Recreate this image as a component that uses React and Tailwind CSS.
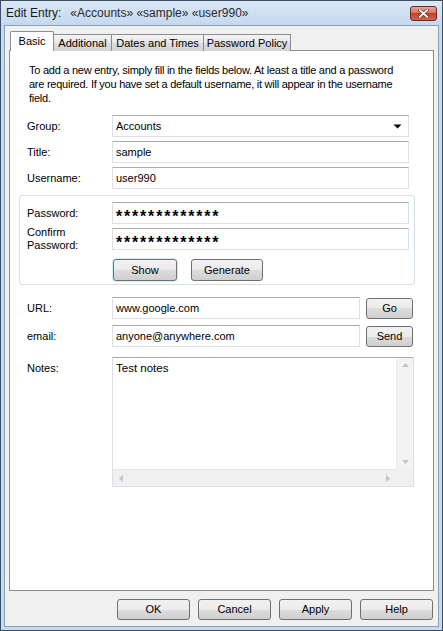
import React from 'react';

const Field = ({ className = '', children }) => (
    <div className={`h-[22px] bg-white border border-[#dbdfe6] border-t-[#abadb3] flex items-center px-[3px] shrink-0 ${className}`}>
        {children}
    </div>
);

const Btn = ({ className = '', children }) => (
    <div className={`h-[21px] rounded-[3px] border border-[#707070] bg-[linear-gradient(#f2f2f2,#ebebeb_50%,#dddddd_50%,#cfcfcf)] flex items-center justify-center text-[11px] text-black shrink-0 ${className}`}>
        {children}
    </div>
);

const Row = ({ label, children, className = '' }) => (
    <div className={`flex items-center h-[22px] ${className}`}>
        <div className="w-[85px] h-[22px] shrink-0 leading-[13px] flex flex-col justify-center">{label}</div>
        {children}
    </div>
);

const Stars = () => (
    <span className="font-bold text-[16px] tracking-[1.8px] leading-none pt-[7px]">*************</span>
);

const App = () => {
    return (
        <div className="w-[443px] h-[631px] flex flex-col border border-[#3b4e66] bg-[#c6daef] font-['Liberation_Sans',Arial,sans-serif] text-[11px] text-black select-none">
            {/* title bar */}
            <div className="h-[24px] shrink-0 flex items-center pl-[5px] pr-[5px] bg-[linear-gradient(#dbe8f6,#c4d8ee)]">
                <span className="text-[12px] text-[#1b1b1b]">Edit Entry:</span>
                <span className="text-[12px] text-[#2b2b2b] ml-[9px]">«Accounts» «sample» «user990»</span>
                <div className="ml-auto w-[27px] h-[15px] rounded-[3px] border border-[#6d2a22] bg-[linear-gradient(#e7a597,#d4705c_50%,#c2402b_50%,#d0664e)] flex items-center justify-center">
                    <svg width="11" height="9" viewBox="0 0 11 9">
                        <path d="M1.5 1 L9.5 8 M9.5 1 L1.5 8" stroke="#5a1a12" strokeWidth="3" strokeLinecap="round" />
                        <path d="M1.5 1 L9.5 8 M9.5 1 L1.5 8" stroke="#ffffff" strokeWidth="1.8" strokeLinecap="round" />
                    </svg>
                </div>
            </div>

            {/* client area */}
            <div className="flex-1 mx-[3px] mb-[3px] bg-[#f0f0f0] border border-[#8b9fb6] flex flex-col px-[4px] pt-[6px]">
                {/* tabs */}
                <div className="flex items-end h-[19px] pl-[1px] relative z-10">
                    <div className="h-[20px] w-[44px] bg-white border border-[#898c95] border-b-0 rounded-t-[2px] flex items-center justify-center pb-[1px] -mr-[1px]">Basic</div>
                    <div className="h-[17px] w-[59px] bg-[linear-gradient(#f4f4f4,#e8e8e8_50%,#dcdcdc_50%,#d5d5d5)] border border-[#898c95] border-b-0 flex items-center justify-center">Additional</div>
                    <div className="h-[17px] w-[93px] -ml-px bg-[linear-gradient(#f4f4f4,#e8e8e8_50%,#dcdcdc_50%,#d5d5d5)] border border-[#898c95] border-b-0 flex items-center justify-center">Dates and Times</div>
                    <div className="h-[17px] w-[88px] -ml-px bg-[linear-gradient(#f4f4f4,#e8e8e8_50%,#dcdcdc_50%,#d5d5d5)] border border-[#898c95] border-b-0 flex items-center justify-center">Password Policy</div>
                </div>

                {/* panel */}
                <div className="h-[541px] -mt-px bg-white border border-[#898c95] pl-[9px] pt-[12px]">
                    <div className="pl-[10px] leading-[14px] tracking-[-0.25px] whitespace-nowrap">
                        <div>To add a new entry, simply fill in the fields below. At least a title and a password</div>
                        <div>are required. If you have set a default username, it will appear in the username</div>
                        <div>field.</div>
                    </div>

                    <div className="pl-[8px] mt-[10px] flex flex-col gap-[4px]">
                        <Row label="Group:">
                            <Field className="w-[297px] justify-between">
                                <span>Accounts</span>
                                <svg width="9" height="5" viewBox="0 0 9 5" className="mr-[3px]">
                                    <path d="M0.5 0.5 L8.5 0.5 L4.5 4.5 Z" fill="#000" />
                                </svg>
                            </Field>
                        </Row>
                        <Row label="Title:">
                            <Field className="w-[297px]">sample</Field>
                        </Row>
                        <Row label="Username:">
                            <Field className="w-[297px]">user990</Field>
                        </Row>
                    </div>

                    {/* password group box */}
                    <div className="mt-[6px] w-[396px] border border-[#d5dfe5] rounded-[3px] pl-[7px] pt-[6px] pb-[3px] flex flex-col gap-[4px]">
                        <Row label="Password:">
                            <Field className="w-[297px]"><Stars /></Field>
                        </Row>
                        <Row label={<><span>Confirm</span><span>Password:</span></>}>
                            <Field className="w-[297px]"><Stars /></Field>
                        </Row>
                        <div className="flex pl-[86px] gap-[14px] mt-[5px]">
                            <Btn className="w-[64px] h-[22px] border-[#3c7fb1] bg-[linear-gradient(#eaf6fd,#d9f0fc_50%,#bee6fd_50%,#a7d9f5)] shadow-[0_0_0_1px_#cfeefc]">Show</Btn>
                            <Btn className="w-[72px] h-[22px]">Generate</Btn>
                        </div>
                    </div>

                    <div className="pl-[8px] mt-[12px] flex flex-col gap-[6px]">
                        <Row label="URL:">
                            <Field className="w-[248px]">www.google.com</Field>
                            <Btn className="w-[47px] ml-[6px]">Go</Btn>
                        </Row>
                        <Row label="email:">
                            <Field className="w-[248px]">anyone@anywhere.com</Field>
                            <Btn className="w-[47px] ml-[6px]">Send</Btn>
                        </Row>
                    </div>

                    <div className="pl-[8px] mt-[10px] flex items-start">
                        <div className="w-[85px] shrink-0 pt-[3px]">Notes:</div>
                        <div className="w-[302px] h-[130px] border border-[#dbdfe6] border-t-[#abadb3] bg-white flex flex-col">
                            <div className="flex flex-1">
                                <div className="flex-1 px-[3px] pt-[2px] text-[11.5px]">Test notes</div>
                                <div className="w-[17px] bg-[#f3f3f3] border-l border-[#ebebeb] flex flex-col justify-between items-center py-[5px]">
                                    <svg width="7" height="4" viewBox="0 0 7 4"><path d="M0 4 L3.5 0 L7 4 Z" fill="#c4c4c4" /></svg>
                                    <svg width="7" height="4" viewBox="0 0 7 4"><path d="M0 0 L7 0 L3.5 4 Z" fill="#c4c4c4" /></svg>
                                </div>
                            </div>
                            <div className="h-[17px] flex">
                                <div className="flex-1 bg-[#f0f0f0] border-t border-[#e6e6e6] flex justify-between items-center px-[6px]">
                                    <svg width="4" height="7" viewBox="0 0 4 7"><path d="M4 0 L4 7 L0 3.5 Z" fill="#c4c4c4" /></svg>
                                    <svg width="4" height="7" viewBox="0 0 4 7"><path d="M0 0 L4 3.5 L0 7 Z" fill="#c4c4c4" /></svg>
                                </div>
                                <div className="w-[17px] bg-[#f0f0f0]"></div>
                            </div>
                        </div>
                    </div>
                </div>

                {/* dialog buttons */}
                <div className="flex justify-end gap-[8px] mt-[8px] pr-[1px]">
                    <Btn className="w-[73px]">OK</Btn>
                    <Btn className="w-[73px]">Cancel</Btn>
                    <Btn className="w-[73px]">Apply</Btn>
                    <Btn className="w-[73px]">Help</Btn>
                </div>
            </div>
        </div>
    );
};

export default App;
